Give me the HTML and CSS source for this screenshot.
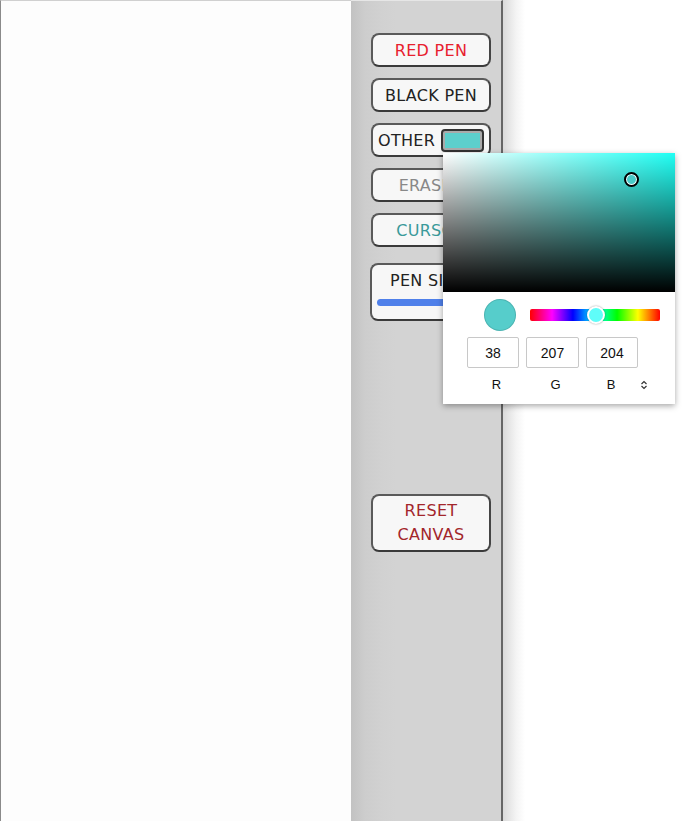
FILE: index.html
```html
<!DOCTYPE html>
<html>
<head>
<meta charset="utf-8">
<link rel="stylesheet" href="styles.css">
</head>
<body>
<div class="app">
  <div class="canvas"></div>
  <div class="panel">
    <button class="btn red">RED PEN</button>
    <button class="btn black">BLACK PEN</button>
    <button class="btn other">OTHER <span class="swatch"><span class="swatch-fill"></span></span></button>
    <button class="btn eraser">ERASER</button>
    <button class="btn cursor">CURSOR</button>
    <div class="btn size">
      <span class="size-label">PEN SIZE</span>
      <div class="range"></div>
    </div>
    <button class="btn reset">RESET<br>CANVAS</button>
  </div>
  <div class="shadow"></div>
</div>
<div class="picker">
  <div class="sat">
    <div class="sat-white"></div>
    <div class="sat-black"></div>
    <div class="marker"></div>
  </div>
  <div class="controls">
    <div class="preview"></div>
    <div class="hue"><div class="hue-thumb"></div></div>
  </div>
  <div class="inputs">
    <div class="field">38</div>
    <div class="field">207</div>
    <div class="field">204</div>
  </div>
  <div class="labels">
    <span class="lbl">R</span>
    <span class="lbl">G</span>
    <span class="lbl">B</span>
    <svg class="toggle" width="8" height="10" viewBox="0 0 8 10"><path d="M1.5 4 L4 1.5 L6.5 4 M1.5 6 L4 8.5 L6.5 6" fill="none" stroke="#333" stroke-width="1.2"/></svg>
  </div>
</div>
</body>
</html>
```
FILE: styles.css
```css
html, body {
  margin: 0;
  padding: 0;
  background: #fff;
}
.app {
  display: flex;
  height: 821px;
}
.canvas {
  width: 351px;
  height: 821px;
  border-left: 1px solid #8a8a8a;
  border-top: 1px solid #d0d0d0;
  box-sizing: border-box;
  background: #fdfdfd;
}
.panel {
  width: 152px;
  height: 821px;
  box-sizing: border-box;
  padding: 32px 10px 0 20px;
  background: linear-gradient(to right, #c2c2c2 0px, #cdcdcd 14px, #d1d1d1 30px, #d3d3d3 45px);
  border-right: 2px solid #666;
  border-top: 1px solid #e6e6e6;
  display: flex;
  flex-direction: column;
  gap: 11px;
}
.shadow {
  width: 22px;
  height: 821px;
  background: linear-gradient(to right, #dadada, #f4f4f4 60%, #fff);
}
.btn {
  width: 120px;
  height: 34px;
  box-sizing: border-box;
  border: 2px solid #5a5a5a;
  border-bottom-color: #3a3a3a;
  border-right-color: #444;
  border-radius: 8px;
  background: #f7f7f7;
  font-family: "Comic Sans MS", "DejaVu Sans", sans-serif;
  font-size: 16px;
  letter-spacing: 0.3px;
  padding: 0;
  margin: 0;
  display: flex;
  align-items: center;
  justify-content: center;
}
.red { color: #e8202e; }
.black { color: #222; }
.eraser { color: #888; }
.cursor { color: #3a9a9a; }
.other {
  color: #222;
  justify-content: flex-start;
  padding-left: 5px;
  gap: 6px;
}
.swatch {
  width: 43px;
  height: 23px;
  box-sizing: border-box;
  border: 2px solid #333;
  border-radius: 4px;
  background: #aaa;
  padding: 2px;
  display: flex;
}
.swatch-fill {
  flex: 1;
  background: #5ccfcc;
}
.size {
  height: 58px;
  margin-top: 5px;
  margin-left: -1px;
  width: 121px;
  flex-direction: column;
  justify-content: flex-start;
  align-items: flex-start;
  padding: 6px 0 0 5px;
  color: #222;
}
.size-label {
  margin-left: 13px;
}
.range {
  margin-top: 9px;
  width: 108px;
  height: 7px;
  border-radius: 4px;
  background: #4f80ea;
}
.reset {
  margin-top: 162px;
  height: 58px;
  color: #a3262b;
  line-height: 24px;
  text-align: center;
}
.picker {
  position: absolute;
  left: 443px;
  top: 153px;
  width: 232px;
  height: 251px;
  background: #fff;
  box-shadow: 0 2px 6px rgba(0,0,0,0.35);
  font-family: "Liberation Sans", Arial, sans-serif;
}
.sat {
  position: relative;
  height: 139px;
  background: #20fff4;
  overflow: hidden;
}
.sat-white {
  position: absolute;
  inset: 0;
  background: linear-gradient(to right, #fff, rgba(255,255,255,0));
}
.sat-black {
  position: absolute;
  inset: 0;
  background: linear-gradient(to bottom, rgba(0,0,0,0), #000);
}
.marker {
  position: absolute;
  left: 181px;
  top: 19px;
  width: 11px;
  height: 11px;
  border: 2px solid #000;
  border-radius: 50%;
  background: #49cbc8;
  box-shadow: inset 0 0 0 1px #fff;
}
.controls {
  display: flex;
  align-items: center;
  height: 46px;
  padding-left: 41px;
  gap: 14px;
}
.preview {
  width: 32px;
  height: 32px;
  border-radius: 50%;
  background: #56cdcb;
  box-shadow: inset 0 0 0 1px rgba(0,0,0,0.12);
}
.hue {
  position: relative;
  width: 130px;
  height: 12px;
  border-radius: 2px;
  background: linear-gradient(to right, #f00 0%, #f0f 17%, #00f 33%, #0ff 50%, #0f0 67%, #ff0 83%, #f00 100%);
}
.hue-thumb {
  position: absolute;
  left: 57px;
  top: -3px;
  width: 14px;
  height: 14px;
  border: 2px solid #fff;
  border-radius: 50%;
  background: #5ffdf9;
  box-shadow: 0 0 2px rgba(0,0,0,0.4);
}
.inputs {
  display: flex;
  gap: 7px;
  padding-left: 24px;
  margin-top: -1px;
}
.field {
  width: 52px;
  height: 31px;
  box-sizing: border-box;
  border: 1px solid #c8c8c8;
  border-radius: 2px;
  display: flex;
  align-items: center;
  justify-content: center;
  font-size: 14px;
  color: #111;
}
.field:nth-child(2) { width: 53px; }
.labels {
  display: flex;
  align-items: center;
  padding-left: 24px;
  margin-top: 9px;
  height: 15px;
  font-size: 13px;
  color: #111;
}
.lbl {
  width: 59px;
  text-align: center;
}
.lbl:nth-child(2) { width: 59px; }
.lbl:nth-child(3) { width: 52px; }
.toggle {
  margin-left: 3px;
}
```
